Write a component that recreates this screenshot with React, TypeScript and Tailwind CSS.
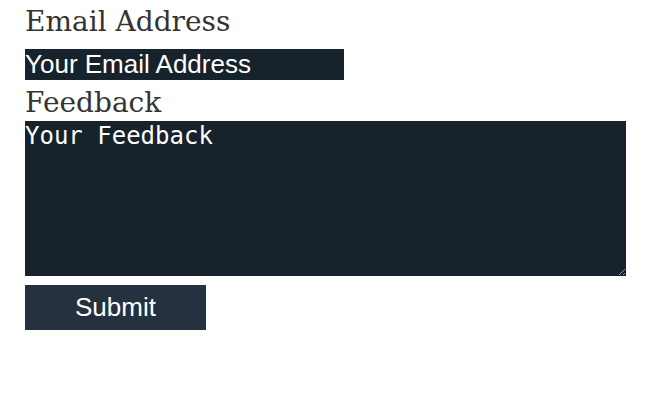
import React from "react";

export default function App() {
  return (
    <div className="min-h-[403px] bg-white px-[25px] pt-[2px]">
      <form className="flex flex-col items-start" onSubmit={(e) => e.preventDefault()}>
        <label className="text-[28px] leading-[40px] text-[#333333] font-['DejaVu_Serif',serif] mb-[7px]">
          Email Address
        </label>
        <input
          type="email"
          placeholder="Your Email Address"
          className="w-[319px] h-[31px] bg-[#16222c] text-white placeholder:text-white text-[26px] leading-[31px] font-['Liberation_Sans',Arial,sans-serif] outline-none"
        />
        <label className="mt-[5px] text-[28px] leading-[36px] text-[#333333] font-['DejaVu_Serif',serif]">
          Feedback
        </label>
        <textarea
          placeholder="Your Feedback"
          className="w-[601px] h-[155px] bg-[#16222c] text-white placeholder:text-white text-[24px] leading-[30px] font-['DejaVu_Sans_Mono',monospace] outline-none resize"
        />
        <button
          type="submit"
          className="mt-[9px] w-[181px] h-[45px] bg-[#263140] text-white text-[26px] font-['Liberation_Sans',Arial,sans-serif]"
        >
          Submit
        </button>
      </form>
    </div>
  );
}
